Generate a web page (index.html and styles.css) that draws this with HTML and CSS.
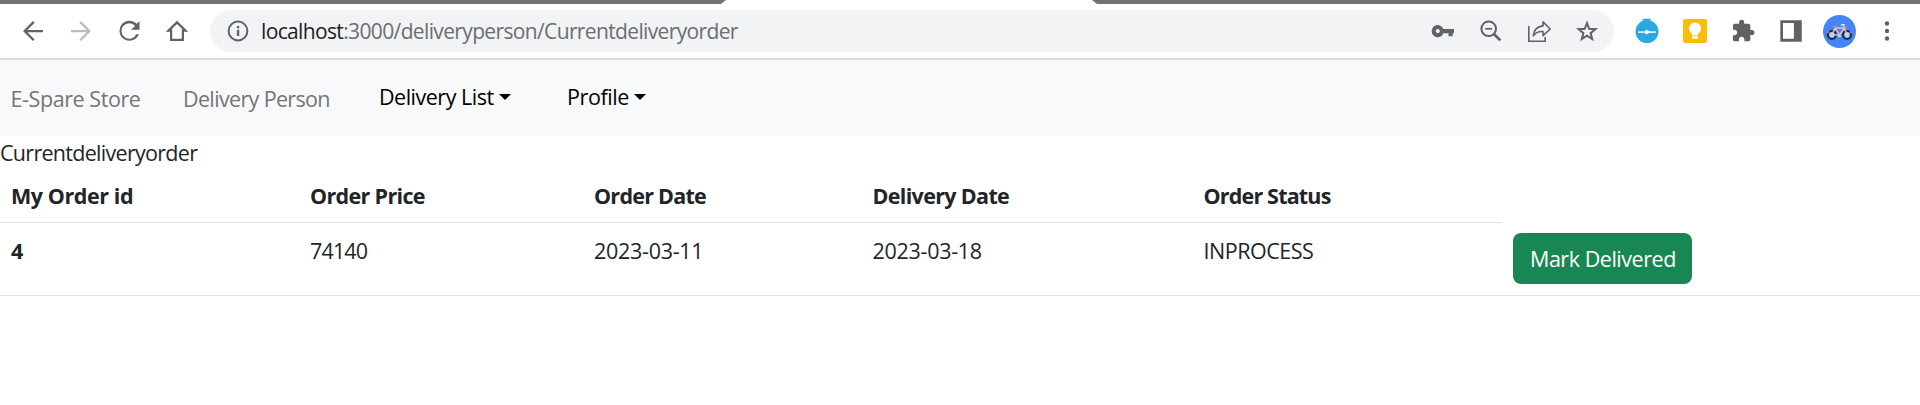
FILE: index.html
```html
<!DOCTYPE html>
<html lang="en">
<head>
<meta charset="utf-8">
<title>E-Spare Store</title>
<link rel="stylesheet" href="styles.css">
</head>
<body>
<header class="browser">
  <div class="tabstrip"><div class="strip-left"></div><div class="strip-right"></div></div>
  <div class="toolbar">
    <div class="icons">
      <svg class="icon" viewBox="0 0 24 24"><path d="M20 11.1H7.5l5.8-5.8L12 4l-8 8 8 8 1.3-1.3-5.8-5.8H20z"/></svg>
      <svg class="icon disabled" viewBox="0 0 24 24"><path d="M4 11.1h12.5l-5.8-5.8L12 4l8 8-8 8-1.3-1.3 5.8-5.8H4z"/></svg>
      <svg class="icon" viewBox="0 0 24 24"><path d="M18.2 6.2A8 8 0 1 0 19.9 14.6h-2.1A6.2 6.2 0 1 1 16.9 7.9L13.6 11H20.4V4.2z"/></svg>
      <svg class="icon" viewBox="0 0 24 24"><path d="M12 5.1 5.2 11.7H7.3v7.4h9.4v-7.4h2.1z" fill="none" stroke="#5f6368" stroke-width="1.8"/></svg>
    </div>
    <div class="omnibox">
      <svg class="icon" viewBox="0 0 30 30"><circle cx="15" cy="15" r="9.4" fill="none" stroke="#5f6368" stroke-width="2"/><path d="M13.9 13.8h2.3v6.2h-2.3zM13.9 10h2.3v2.2h-2.3z"/></svg>
      <div class="url"><span class="host">localhost</span>:3000/deliveryperson/Currentdeliveryorder</div>
      <div class="icons">
        <svg class="icon" viewBox="0 0 30 30"><path fill-rule="evenodd" d="M15.4 13A6.1 6.1 0 1 0 15.4 17.2H20.5V20.2h4.200V17.2H26V13zM9.8 17.2a2.1 2.1 0 1 1 0-4.2 2.1 2.1 0 0 1 0 4.2z"/></svg>
        <svg class="icon" viewBox="0 0 30 30"><g fill="none" stroke="#5f6368"><circle cx="12.7" cy="12.8" r="7.3" stroke-width="2"/><path d="M9.2 12.8h7" stroke-width="1.7"/><path d="m17.800 18 6.600 6.400" stroke-width="2.7"/></g></svg>
        <svg class="icon" viewBox="0 0 30 30"><g fill="none" stroke="#5f6368" stroke-width="1.6"><path d="M4.8 10v15.2h16.4v-4.2"/><path d="M19 5.9 26.2 13 19 19.600v-4c-4.4-.3-7.3.8-9.7 4.200.5-5.8 4-9.3 9.7-9.900z" stroke-linejoin="round"/></g></svg>
        <svg class="icon" viewBox="0 0 30 30"><path d="m15 7 2.2 5.800 6.200.4-4.800 3.900 1.600 6-5.200-3.400-5.200 3.400 1.600-6-4.800-3.900 6.200-.4z" fill="none" stroke="#5f6368" stroke-width="2"/></svg>
      </div>
    </div>
    <div class="icons">
      <svg class="icon" viewBox="0 0 30 30"><g fill="#2ca8e0"><circle cx="15" cy="15.600" r="11.500"/><path d="M10.600 2.800h8v1.700h-2.400V7h-2.600V4.500h-3z"/></g><path d="M6 16.100h18" stroke="#fff" stroke-width="1.4"/><circle cx="14.600" cy="16.100" r="1.700" fill="#fff"/><path d="m13.700 13.400 5 2.700-5 2.700z" fill="#fff"/></svg>
      <svg class="icon" viewBox="0 0 30 30"><rect x="3" y="3" width="24" height="24" rx="2.4" fill="#fbbc04"/><path d="M12.100 18.100a6.200 6.200 0 1 1 5.800 0v1.300h-5.800zM12.100 20.200h5.800v2.600h-5.800z" fill="#fff"/></svg>
      <svg class="icon" viewBox="0 0 24 24"><path d="M20.5 11H19V7c0-1.100-.9-2-2-2h-4V3.500a2.500 2.500 0 0 0-5 0V5H4c-1.100 0-1.990.9-1.990 2v3.800H3.500c1.490 0 2.700 1.210 2.700 2.700s-1.210 2.700-2.700 2.700H2V20c0 1.100.9 2 2 2h3.800v-1.500c0-1.490 1.210-2.700 2.700-2.700s2.700 1.210 2.700 2.700V22H17c1.100 0 2-.9 2-2v-4h1.500a2.500 2.500 0 0 0 0-5z" transform="translate(2.300 2.100) scale(.82)"/></svg>
      <svg class="icon" viewBox="0 0 30 30"><path fill-rule="evenodd" d="M4.300 4.200h21.500v21.500H4.300zM7 7.100v15.700h10.900V7.100z"/></svg>
      <svg class="icon avatar" viewBox="0 0 33 33"><circle cx="16.500" cy="16.500" r="16.500" fill="#4285f4"/><g fill="#a9dcf8" stroke="#1d2c4c" stroke-width="2.200"><circle cx="8.900" cy="19.900" r="3.900"/><circle cx="24" cy="19.900" r="3.900"/></g><path d="M8.900 19.900 12.200 13H21.400L16.600 20zM12 12.500l4.600 7.500M24 19.900l-3.500-9.700" fill="none" stroke="#dfc5c5" stroke-width="1.400"/><path d="M9.800 11.600h4.700M21.500 12.600h2.500M4.600 18l1.200-1.600M28.300 18l-1.200-1.600" stroke="#e07a62" stroke-width="1.800"/><path d="M18 9.700h3.700M15.100 21.400h3" stroke="#e8eaed" stroke-width="1.400"/></svg>
      <svg class="icon" viewBox="0 0 30 30"><circle cx="15" cy="7.500" r="2.200"/><circle cx="15" cy="15" r="2.200"/><circle cx="15" cy="22.500" r="2.200"/></svg>
    </div>
  </div>
</header>
<nav class="navbar">
  <a class="brand">E-Spare Store</a>
  <a class="brand person">Delivery Person</a>
  <a class="menu list">Delivery List</a>
  <a class="menu profile">Profile</a>
</nav>
<main>
  <div class="page-name">Currentdeliveryorder</div>
  <table class="orders">
    <colgroup><col class="c-id"><col class="c-price"><col class="c-date"><col class="c-delivery"><col class="c-status"><col></colgroup>
    <thead>
      <tr><th class="h-id">My Order id</th><th>Order Price</th><th class="h-date">Order Date</th><th>Delivery Date</th><th class="h-status">Order Status</th></tr>
    </thead>
    <tbody>
      <tr><th>4</th><td class="price">74140</td><td class="date">2023-03-11</td><td class="date">2023-03-18</td><td class="status">INPROCESS</td><td class="action"><button class="deliver">Mark Delivered</button></td></tr>
    </tbody>
  </table>
</main>
</body>
</html>
```
FILE: styles.css
```css
* { box-sizing: border-box; }
body {
  margin: 0;
  background: #fff;
  color: #212529;
  font: 21.5px/33px "Open Sans", "Noto Sans", sans-serif;
  overflow: hidden;
}
.browser { height: 60px; border-bottom: 2px solid #d9dbde; }
.tabstrip { display: flex; justify-content: space-between; height: 4px; }
.strip-left, .strip-right { background: #737373; }
.strip-left { width: 726px; clip-path: polygon(0 0, 100% 0, calc(100% - 5px) 100%, 0 100%); }
.strip-right { width: 828px; clip-path: polygon(0 0, 100% 0, 100% 100%, 5px 100%); }
.toolbar { display: flex; align-items: center; gap: 18px; height: 54px; padding-left: 18px; }
.icons { display: flex; align-items: center; gap: 18px; }
.icon { display: block; flex: none; width: 30px; height: 30px; fill: #5f6368; }
.disabled { fill: #bbbdbf; }
.avatar { width: 33px; height: 33px; margin: 0 -1.5px; }
.omnibox {
  display: flex;
  align-items: center;
  width: 1404px;
  height: 42px;
  padding: 0 12px 0 12.5px;
  border-radius: 21px;
  background: #f1f3f4;
}
.url {
  flex: 1;
  padding: 0 0 0 8.5px;
  color: #6b6e72;
  font-size: 21px;
  line-height: 30px;
  letter-spacing: -0.64px;
  white-space: nowrap;
}
.host { color: #202124; }

.navbar { display: flex; align-items: flex-start; height: 76px; padding: 20px 10.5px; background: #f8f9fa; white-space: nowrap; }
.brand { width: 172.5px; padding-top: 2px; color: #747576; letter-spacing: -0.42px; }
.person { width: 196px; letter-spacing: -0.65px; }
.menu { display: flex; color: #000; }
.menu::after { content: ""; margin: 14px 0 0 5px; height: 0; border: 6px solid transparent; border-top-color: #000; border-bottom: 0; }
.list { width: 188px; letter-spacing: -0.5px; }
.profile { letter-spacing: -0.4px; }

.page-name { letter-spacing: -0.71px; }
.orders { width: 100%; table-layout: fixed; border-collapse: separate; border-spacing: 0; }
.c-id { width: 299px; }
.c-price { width: 284px; }
.c-date { width: 278.5px; }
.c-delivery { width: 331px; }
.c-status { width: 309.5px; }
.orders th, .orders td {
  padding: 11px 11px 10px;
  border-bottom: 1px solid #dee2e6;
  text-align: left;
  vertical-align: top;
  white-space: nowrap;
}
.orders thead th { padding: 10px 11px; letter-spacing: -0.66px; }
.orders thead .h-id { letter-spacing: -0.42px; }
.orders thead .h-date { letter-spacing: -0.75px; }
.orders thead .h-status { letter-spacing: -0.82px; }
.price { letter-spacing: -0.85px; }
.date { letter-spacing: -0.28px; }
.status { letter-spacing: -0.48px; }
.orders .action { padding-top: 10px; padding-bottom: 11px; }
.deliver {
  display: block;
  width: 179px;
  height: 51px;
  padding: 9px 0 9px 17px;
  border: 0;
  border-radius: 8px;
  background: #198754;
  color: #fff;
  font: inherit;
  letter-spacing: -0.46px;
  text-align: left;
}
```
